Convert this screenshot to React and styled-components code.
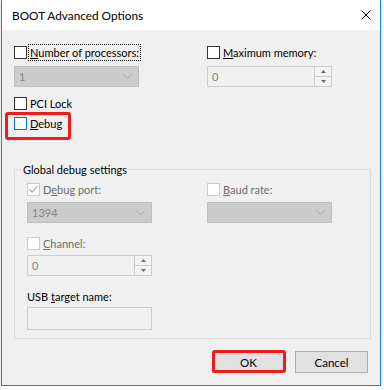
import styled, { createGlobalStyle } from "styled-components";

const Global = createGlobalStyle`
  body {
    margin: 0;
    background: #ffffff;
    font-family: "Segoe UI", Lato, sans-serif;
    font-size: 11px;
    color: #000;
  }
`;

const Window = styled.div`
  box-sizing: border-box;
  width: 380px;
  height: 386px;
  margin-left: 1px;
  border: 1px solid #1883d7;
  border-top: none;
  background: #f0f0f0;
  display: flex;
  flex-direction: column;
  box-shadow: 0 2px 5px rgba(0, 0, 0, 0.18);
`;

const TitleBar = styled.div`
  height: 30px;
  flex: none;
  background: #fff;
  display: flex;
  align-items: center;
  justify-content: space-between;
  padding: 0 9px 0 10px;
`;

const Title = styled.span`
  font-size: 11.8px;
  line-height: 15px;
`;

const Body = styled.div`
  padding: 14px 9px 0 12px;
`;

const Columns = styled.div`
  display: grid;
  grid-template-columns: ${(p) => p.$left}px 1fr;
`;

const Stack = styled.div`
  display: flex;
  flex-direction: column;
  align-items: flex-start;
`;

const CheckRow = styled.label`
  position: relative;
  display: flex;
  align-items: center;
  gap: 3px;
  height: 16px;
  margin-top: ${(p) => p.$mt || 0}px;
  color: ${(p) => (p.$disabled ? "#6d6d6d" : "#000")};
  line-height: 15px;

  ${(p) =>
    p.$marked &&
    `
    &::after {
      content: "";
      position: absolute;
      left: -9px;
      top: -3px;
      width: 66px;
      height: 28px;
      box-sizing: border-box;
      border: 3px solid #f21b1b;
      border-radius: 3px;
    }
  `}
`;

const Box = styled.span`
  box-sizing: border-box;
  width: 13px;
  height: 13px;
  flex: none;
  background: #fff;
  border: 1px solid ${(p) => p.$color};
  display: flex;
  align-items: center;
  justify-content: center;
`;

const Focus = styled.span`
  outline: 1px dotted #000;
  outline-offset: 0px;
  padding: 0 1px;
  margin-left: -1px;
`;

const Field = styled.div`
  box-sizing: border-box;
  width: 125px;
  height: ${(p) => p.$h || 21}px;
  margin-top: ${(p) => p.$mt || 0}px;
  display: flex;
  align-items: center;
  background: ${(p) => p.$bg};
  border: 1px solid ${(p) => p.$line};
  color: #838383;
  line-height: 15px;
`;

const Value = styled.span`
  flex: 1;
  padding-left: 4px;
`;

const Chevron = styled.svg`
  margin-right: 6px;
`;

const Spin = styled.div`
  align-self: stretch;
  width: 16px;
  display: flex;
  flex-direction: column;
  border-left: 1px solid #cccccc;
`;

const SpinHalf = styled.div`
  flex: 1;
  display: flex;
  align-items: center;
  justify-content: center;
  background: #f3f3f3;
  & + & {
    border-top: 1px solid #cccccc;
  }
`;

const Group = styled.fieldset`
  margin: 31px 0 0 0;
  padding: 4px 12px 8px 12px;
  border: 1px solid #dcdcdc;
  min-width: 0;
`;

const Legend = styled.legend`
  margin-left: -6px;
  padding: 0 2px;
  line-height: 15px;
`;

const Caption = styled.div`
  margin-top: 13px;
  line-height: 15px;
`;

const Footer = styled.div`
  display: flex;
  justify-content: flex-end;
  gap: 10px;
  padding: 12px 12px 0 0;
`;

const Button = styled.button`
  position: relative;
  box-sizing: border-box;
  width: 73px;
  height: 22px;
  padding: 0;
  font: inherit;
  font-size: 11.5px;
  color: #000;
  background: #e1e1e1;
  border: 1px solid #adadad;

  ${(p) =>
    p.$marked &&
    `
    &::after {
      content: "";
      position: absolute;
      left: -1px;
      top: -2px;
      right: -2px;
      bottom: -1px;
      border: 3px solid #f21b1b;
      border-radius: 3px;
    }
  `}
`;

const Check = ({ color = "#333", checked }) => (
  <Box $color={color}>
    {checked && (
      <svg width="11" height="11" viewBox="0 0 11 11">
        <path d="M1.5 5.5 L4.2 8.2 L9.5 2.2" fill="none" stroke="#a8a8a8" strokeWidth="1.2" />
      </svg>
    )}
  </Box>
);

const Combo = ({ value, mt }) => (
  <Field $bg="#cccccc" $line="#bfbfbf" $mt={mt}>
    <Value>{value}</Value>
    <Chevron width="9" height="5" viewBox="0 0 9 5">
      <path d="M0.5 0.5 L4.5 4.5 L8.5 0.5" fill="none" stroke="#a6a6a6" strokeWidth="1" />
    </Chevron>
  </Field>
);

const SpinBox = ({ value, mt }) => (
  <Field $bg="#f0f0f0" $line="#cccccc" $mt={mt}>
    <Value>{value}</Value>
    <Spin>
      <SpinHalf>
        <svg width="5" height="3" viewBox="0 0 5 3">
          <path d="M2.5 0 L5 3 L0 3 Z" fill="#6a6a6a" />
        </svg>
      </SpinHalf>
      <SpinHalf>
        <svg width="5" height="3" viewBox="0 0 5 3">
          <path d="M0 0 L5 0 L2.5 3 Z" fill="#6a6a6a" />
        </svg>
      </SpinHalf>
    </Spin>
  </Field>
);

export default function App() {
  return (
    <>
      <Global />
      <Window>
        <TitleBar>
          <Title>BOOT Advanced Options</Title>
          <svg width="10" height="10" viewBox="0 0 10 10">
            <path d="M0.5 0.5 L9.5 9.5 M9.5 0.5 L0.5 9.5" stroke="#000" strokeWidth="1" />
          </svg>
        </TitleBar>
        <Body>
          <Columns $left={193}>
            <Stack>
              <CheckRow>
                <Check />
                <Focus>
                  <u>N</u>umber of processors:
                </Focus>
              </CheckRow>
              <Combo value="1" mt={6} />
              <CheckRow $mt={8}>
                <Check />
                PCI Lock
              </CheckRow>
              <CheckRow $mt={4} $marked>
                <Check color="#0078d7" />
                <span>
                  <u>D</u>ebug
                </span>
              </CheckRow>
            </Stack>
            <Stack>
              <CheckRow>
                <Check />
                <span>
                  <u>M</u>aximum memory:
                </span>
              </CheckRow>
              <SpinBox value="0" mt={6} />
            </Stack>
          </Columns>

          <Group>
            <Legend>Global debug settings</Legend>
            <Columns $left={180}>
              <Stack>
                <CheckRow $disabled>
                  <Check color="#cccccc" checked />
                  <span>
                    D<u>e</u>bug port:
                  </span>
                </CheckRow>
                <Combo value="1394" mt={5} />
                <CheckRow $disabled $mt={12}>
                  <Check color="#cccccc" />
                  <span>
                    <u>C</u>hannel:
                  </span>
                </CheckRow>
                <SpinBox value="0" mt={4} />
                <Caption>
                  USB <u>t</u>arget name:
                </Caption>
                <Field $bg="#f0f0f0" $line="#cccccc" $h={23} $mt={3} />
              </Stack>
              <Stack>
                <CheckRow $disabled>
                  <Check color="#cccccc" />
                  <span>
                    <u>B</u>aud rate:
                  </span>
                </CheckRow>
                <Combo value="" mt={5} />
              </Stack>
            </Columns>
          </Group>
        </Body>
        <Footer>
          <Button $marked>OK</Button>
          <Button>Cancel</Button>
        </Footer>
      </Window>
    </>
  );
}
